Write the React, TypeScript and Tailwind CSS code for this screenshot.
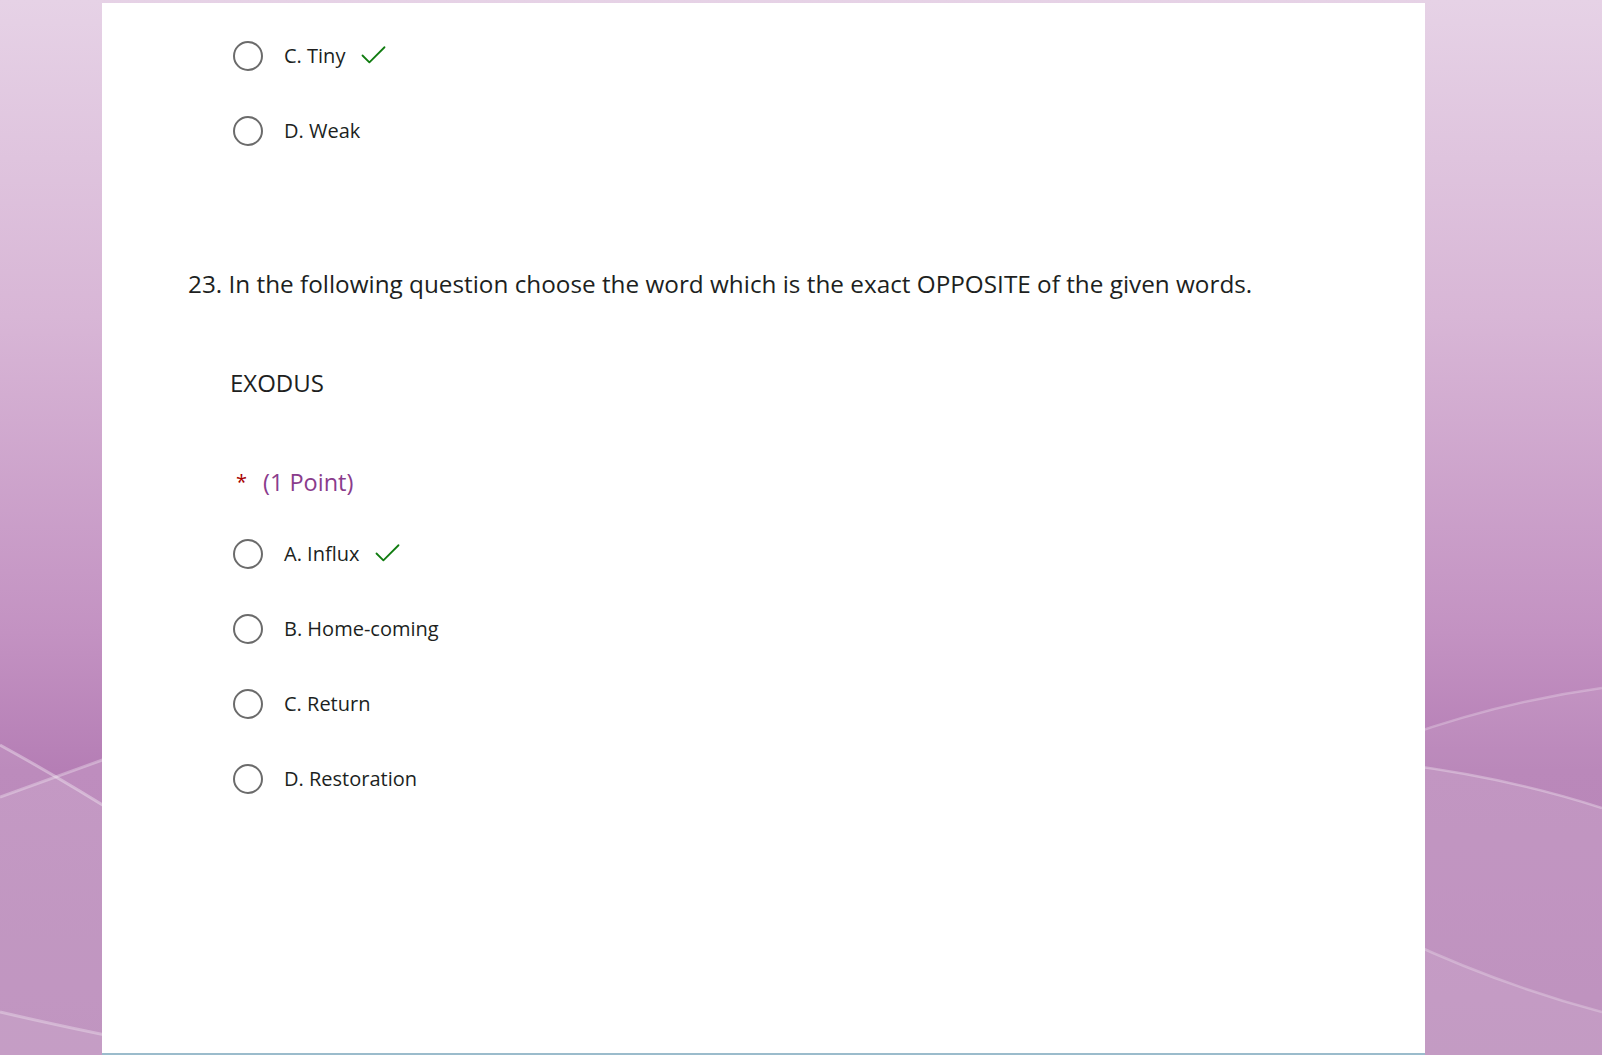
import { Check } from 'lucide-react';

type Option = { label: string; correct?: boolean };

const prevOptions: Option[] = [{ label: 'C. Tiny', correct: true }, { label: 'D. Weak' }];

const options: Option[] = [
  { label: 'A. Influx', correct: true },
  { label: 'B. Home-coming' },
  { label: 'C. Return' },
  { label: 'D. Restoration' },
];

function Backdrop() {
  return (
    <svg
      className="absolute inset-0 h-full w-full"
      viewBox="0 0 1602 1055"
      preserveAspectRatio="none"
    >
      <defs>
        <linearGradient id="bg" x1="0" y1="0" x2="0" y2="1">
          <stop offset="0" stopColor="#e6d2e6" />
          <stop offset="0.3" stopColor="#d8b6d6" />
          <stop offset="0.6" stopColor="#c392c2" />
          <stop offset="0.73" stopColor="#b57eb5" />
          <stop offset="1" stopColor="#b07ab0" />
        </linearGradient>
      </defs>
      <rect width="1602" height="1055" fill="url(#bg)" />

      {/* left waves */}
      <path d="M0 745 Q60 778 130 822 L130 1055 L0 1055 Z" fill="#fff" fillOpacity="0.1" />
      <path d="M0 797 Q60 775 130 750 L130 1055 L0 1055 Z" fill="#fff" fillOpacity="0.12" />
      <path d="M0 1012 Q60 1026 130 1040 L130 1055 L0 1055 Z" fill="#fff" fillOpacity="0.08" />
      <path d="M0 745 Q60 778 130 822" stroke="#fff" strokeOpacity="0.35" strokeWidth="3" fill="none" />
      <path d="M0 797 Q60 775 130 750" stroke="#fff" strokeOpacity="0.3" strokeWidth="3" fill="none" />
      <path d="M0 1012 Q60 1026 130 1040" stroke="#fff" strokeOpacity="0.3" strokeWidth="3" fill="none" />

      {/* right waves */}
      <path d="M1400 738 Q1500 702 1602 688 L1602 1055 L1400 1055 Z" fill="#fff" fillOpacity="0.08" />
      <path d="M1400 764 Q1510 778 1602 808 L1602 1055 L1400 1055 Z" fill="#fff" fillOpacity="0.12" />
      <path d="M1400 938 Q1500 985 1602 1012 L1602 1055 L1400 1055 Z" fill="#fff" fillOpacity="0.08" />
      <path d="M1400 738 Q1500 702 1602 688" stroke="#fff" strokeOpacity="0.25" strokeWidth="2.5" fill="none" />
      <path d="M1400 764 Q1510 778 1602 808" stroke="#fff" strokeOpacity="0.3" strokeWidth="2.5" fill="none" />
      <path d="M1400 938 Q1500 985 1602 1012" stroke="#fff" strokeOpacity="0.25" strokeWidth="2.5" fill="none" />
    </svg>
  );
}

function Radio({ option }: { option: Option }) {
  return (
    <div className="flex h-[75px] items-center pl-[45px]">
      <span className="h-[30px] w-[30px] shrink-0 rounded-full border-2 border-[#6b6b6b]" />
      <span className="ml-[21px] text-[20px] text-[#201f1e]">{option.label}</span>
      {option.correct && (
        <Check className="ml-[12px] h-[33px] w-[33px] text-[#107c10]" strokeWidth={1.3} />
      )}
    </div>
  );
}

export default function App() {
  return (
    <div
      className="relative h-[1055px] w-[1602px] overflow-hidden"
      style={{ fontFamily: '"Open Sans", "Noto Sans", sans-serif' }}
    >
      <Backdrop />
      <div className="relative flex h-full flex-col pl-[102px] pr-[177px] pt-[3px]">
        <div className="flex flex-1 flex-col bg-white pt-[15px] pl-[86px]">
          {prevOptions.map((o) => (
            <Radio key={o.label} option={o} />
          ))}

          <p className="mt-[100px] text-[24.3px] leading-[32px] text-[#201f1e]">
            23. In the following question choose the word which is the exact OPPOSITE of the given words.
          </p>

          <p className="mt-[67px] pl-[42px] text-[24px] leading-[32px] text-[#201f1e]">EXODUS</p>

          <div className="mt-[67px] flex items-center pl-[48px] leading-[32px]">
            <span className="text-[20px] text-[#a80000]">*</span>
            <span className="ml-[16px] text-[23.5px] text-[#8a3c8c]">(1 Point)</span>
          </div>

          <div className="mt-[18px] flex flex-col">
            {options.map((o) => (
              <Radio key={o.label} option={o} />
            ))}
          </div>
        </div>
        <div className="h-[2px] bg-[#9bbccc]" />
      </div>
    </div>
  );
}
